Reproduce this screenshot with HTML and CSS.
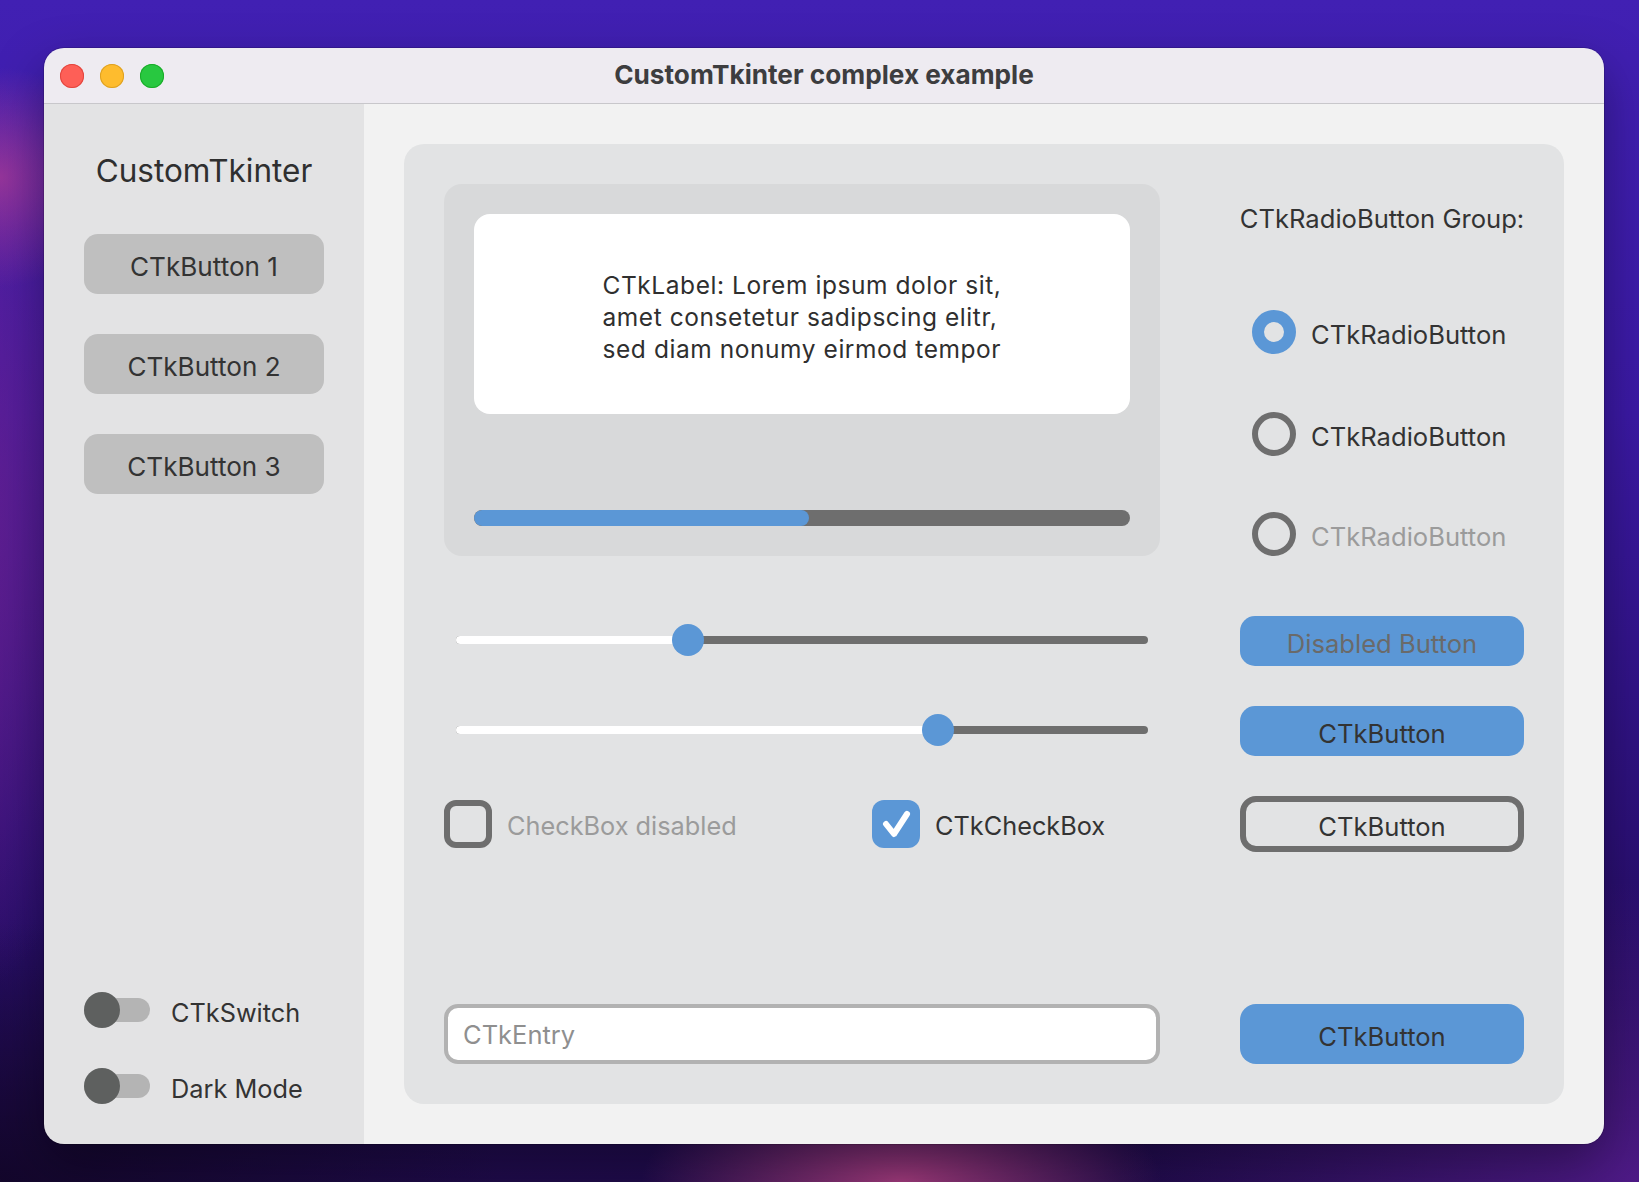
FILE: index.html
```html
<!DOCTYPE html>
<html lang="en">
<head>
<meta charset="utf-8">
<title>CustomTkinter complex example</title>
<link rel="stylesheet" href="styles.css">
</head>
<body>
<div class="window">
  <header class="titlebar">
    <div class="lights">
      <span class="light red"></span>
      <span class="light yellow"></span>
      <span class="light green"></span>
    </div>
    <div class="title">CustomTkinter complex example</div>
    <div></div>
  </header>
  <div class="content">
    <aside class="sidebar">
      <div class="logo">CustomTkinter</div>
      <div class="side-btn first">CTkButton 1</div>
      <div class="side-btn">CTkButton 2</div>
      <div class="side-btn">CTkButton 3</div>
      <div class="switches">
        <div class="switch-row">
          <span class="switch"><span class="knob"></span></span>
          <span class="switch-text">CTkSwitch</span>
        </div>
        <div class="switch-row">
          <span class="switch"><span class="knob"></span></span>
          <span class="switch-text">Dark Mode</span>
        </div>
      </div>
    </aside>
    <main class="main">
      <div class="panel">
        <div class="col-left">
          <div class="frame">
            <div class="label-box">
              <p class="label-text">CTkLabel: Lorem ipsum dolor sit,<br>amet consetetur sadipscing elitr,<br>sed diam nonumy eirmod tempor</p>
            </div>
            <div class="progress"><div class="progress-fill" style="width:51.1%"></div></div>
          </div>
          <div class="slider first">
            <div class="track"><div class="track-fill" style="width:232px"></div></div>
            <span class="thumb" style="left:216px"></span>
          </div>
          <div class="slider second">
            <div class="track"><div class="track-fill" style="width:482px"></div></div>
            <span class="thumb" style="left:466px"></span>
          </div>
          <div class="check-row">
            <div class="check-item disabled">
              <span class="checkbox"></span>
              <span class="check-text">CheckBox disabled</span>
            </div>
            <div class="check-item">
              <span class="checkbox checked">
                <svg width="48" height="48" viewBox="0 0 48 48"><polyline points="14,24 22,34 35,14" fill="none" stroke="#ffffff" stroke-width="6" stroke-linecap="round" stroke-linejoin="round"/></svg>
              </span>
              <span class="check-text">CTkCheckBox</span>
            </div>
          </div>
          <div class="entry">CTkEntry</div>
        </div>
        <div class="col-right">
          <div class="group-label">CTkRadioButton Group:</div>
          <div class="radio-row r1"><span class="radio selected"></span><span class="radio-text">CTkRadioButton</span></div>
          <div class="radio-row r2"><span class="radio"></span><span class="radio-text">CTkRadioButton</span></div>
          <div class="radio-row r3"><span class="radio"></span><span class="radio-text disabled">CTkRadioButton</span></div>
          <div class="btn blue disabled-btn">Disabled Button</div>
          <div class="btn blue second-btn">CTkButton</div>
          <div class="btn outline">CTkButton</div>
          <div class="btn blue bottom-btn">CTkButton</div>
        </div>
      </div>
    </main>
  </div>
</div>
</body>
</html>
```

FILE: styles.css
```css
* { box-sizing: border-box; }

html, body { margin: 0; }

body {
  width: 1639px;
  height: 1182px;
  overflow: hidden;
  padding: 48px 0 0 44px;
  font-family: Inter, "Noto Sans", sans-serif;
  color: #323232;
  background:
    radial-gradient(ellipse 260px 110px at 55% 100%, rgba(165, 60, 125, 0.95), rgba(165, 60, 125, 0) 100%),
    radial-gradient(ellipse 110px 110px at 0% 15%, rgba(175, 60, 150, 0.75), rgba(175, 60, 150, 0) 100%),
    radial-gradient(ellipse 200px 480px at -4% 45%, rgba(120, 35, 140, 0.85), rgba(120, 35, 140, 0) 100%),
    radial-gradient(ellipse 520px 300px at 100% 100%, rgba(90, 30, 150, 0.8), rgba(90, 30, 150, 0) 100%),
    radial-gradient(ellipse 500px 260px at 0% 100%, rgba(18, 6, 40, 0.9), rgba(18, 6, 40, 0) 100%),
    linear-gradient(180deg, #4120b3 0%, #3b19a4 35%, #2c1078 70%, #1f0b4a 100%);
}

.window {
  width: 1560px;
  height: 1096px;
  border-radius: 20px;
  overflow: hidden;
  display: flex;
  flex-direction: column;
  box-shadow: 0 0 0 1px rgba(0, 0, 0, 0.15), 0 20px 50px rgba(0, 0, 0, 0.35);
}

.titlebar {
  height: 56px;
  flex: none;
  background: #eeebf1;
  border-bottom: 1px solid #c8c7cb;
  display: grid;
  grid-template-columns: 1fr auto 1fr;
  align-items: center;
  padding: 0 16px;
}

.lights { display: flex; gap: 16px; }

.light {
  width: 24px;
  height: 24px;
  border-radius: 50%;
  display: block;
}
.light.red { background: #fe5f57; box-shadow: inset 0 0 0 1px #e2463f; }
.light.yellow { background: #febc2e; box-shadow: inset 0 0 0 1px #dea123; }
.light.green { background: #28c840; box-shadow: inset 0 0 0 1px #1aab29; }

.title {
  font-weight: 700;
  font-size: 26.2px;
  color: #3d3d3f;
  line-height: 32px;
  padding-bottom: 1px;
}

.content {
  flex: 1;
  display: flex;
}

.sidebar {
  width: 320px;
  flex: none;
  background: #e3e3e4;
  display: flex;
  flex-direction: column;
  align-items: center;
  padding: 47px 40px 40px;
}

.logo {
  font-size: 31.5px;
  line-height: 40px;
  color: #2f2f2f;
}

.side-btn {
  width: 240px;
  height: 60px;
  border-radius: 14px;
  background: #bfbfbf;
  display: flex;
  align-items: center;
  justify-content: center;
  font-size: 26.1px;
  padding-top: 5px;
  color: #333;
  margin-top: 40px;
}
.side-btn.first { margin-top: 43px; }

.switches {
  margin-top: auto;
  align-self: stretch;
  display: flex;
  flex-direction: column;
  gap: 40px;
}

.switch-row {
  display: flex;
  align-items: center;
  height: 36px;
}

.switch {
  width: 66px;
  height: 24px;
  border-radius: 12px;
  background: #b4b4b4;
  display: flex;
  align-items: center;
}

.knob {
  width: 36px;
  height: 36px;
  border-radius: 50%;
  background: #5e605f;
  flex: none;
}

.switch-text {
  margin-left: 21px;
  font-size: 25.3px;
  padding-top: 4px;
  color: #333;
}

.main {
  flex: 1;
  background: #f2f2f2;
  padding: 40px;
  display: flex;
}

.panel {
  flex: 1;
  background: #e2e3e4;
  border-radius: 20px;
  padding: 40px;
  display: flex;
  gap: 80px;
}

.col-left {
  width: 716px;
  display: flex;
  flex-direction: column;
}

.frame {
  height: 372px;
  background: #d8d9da;
  border-radius: 18px;
  padding: 30px;
  display: flex;
  flex-direction: column;
}

.label-box {
  height: 200px;
  background: #ffffff;
  border-radius: 16px;
  display: flex;
  align-items: center;
  justify-content: center;
}

.label-text {
  margin: 0;
  padding-top: 5px;
  font-size: 24.5px;
  letter-spacing: 0.56px;
  line-height: 32px;
  color: #2f2f2f;
}

.progress {
  margin-top: auto;
  height: 16px;
  border-radius: 8px;
  background: #6e6e6e;
  overflow: hidden;
}

.progress-fill {
  height: 100%;
  background: #5b97d6;
  border-radius: 8px;
}

.slider {
  position: relative;
  height: 32px;
  margin: 68px 12px 0;
  display: flex;
  align-items: center;
}
.slider.second { margin-top: 58px; }

.track {
  flex: 1;
  height: 8px;
  border-radius: 4px;
  background: #6e6e6e;
  overflow: hidden;
}

.track-fill {
  height: 100%;
  background: #ffffff;
}

.thumb {
  position: absolute;
  top: 0;
  width: 32px;
  height: 32px;
  border-radius: 50%;
  background: #5b97d6;
}

.check-row {
  margin-top: 54px;
  display: flex;
  height: 48px;
}

.check-item {
  display: flex;
  align-items: center;
}
.check-item.disabled { width: 428px; }

.checkbox {
  width: 48px;
  height: 48px;
  border-radius: 12px;
  border: 6px solid #6e6e6e;
  flex: none;
  display: block;
}
.checkbox.checked {
  border: none;
  background: #5b97d6;
}
.checkbox svg { display: block; }

.check-text {
  margin-left: 15px;
  font-size: 25.3px;
  padding-top: 3px;
  color: #333;
}
.check-item.disabled .check-text { color: #9b9b9b; }

.entry {
  margin-top: auto;
  height: 60px;
  border: 4px solid #b2b2b2;
  border-radius: 14px;
  background: #ffffff;
  display: flex;
  align-items: center;
  padding-left: 15px;
  font-size: 25.5px;
  color: #8f8f8f;
}

.col-right {
  width: 284px;
  display: flex;
  flex-direction: column;
}

.group-label {
  margin: 20px -4px 0;
  text-align: center;
  white-space: nowrap;
  font-size: 25.6px;
  line-height: 30px;
  color: #333;
}

.radio-row {
  display: flex;
  align-items: center;
  height: 44px;
  padding-left: 12px;
}
.radio-row.r1 { margin-top: 76px; }
.radio-row.r2 { margin-top: 58px; }
.radio-row.r3 { margin-top: 56px; }

.radio {
  width: 44px;
  height: 44px;
  border-radius: 50%;
  border: 6px solid #6e6e6e;
  flex: none;
}
.radio.selected {
  border: 12px solid #5b97d6;
}

.radio-text {
  margin-left: 15px;
  font-size: 25.6px;
  padding-top: 4px;
  color: #333;
  white-space: nowrap;
}
.radio-text.disabled { color: #9b9b9b; }

.btn {
  display: flex;
  align-items: center;
  justify-content: center;
  font-size: 25.6px;
  padding-top: 4px;
  color: #333;
  border-radius: 15px;
  white-space: nowrap;
}
.btn.blue { background: #5b97d6; }
.disabled-btn { height: 50px; margin-top: 60px; color: #6a6a6a; }
.second-btn { height: 50px; margin-top: 40px; }
.btn.outline {
  height: 56px;
  margin-top: 40px;
  border: 6px solid #6e6e6e;
  border-radius: 16px;
}
.bottom-btn { height: 60px; margin-top: auto; border-radius: 16px; }
```
